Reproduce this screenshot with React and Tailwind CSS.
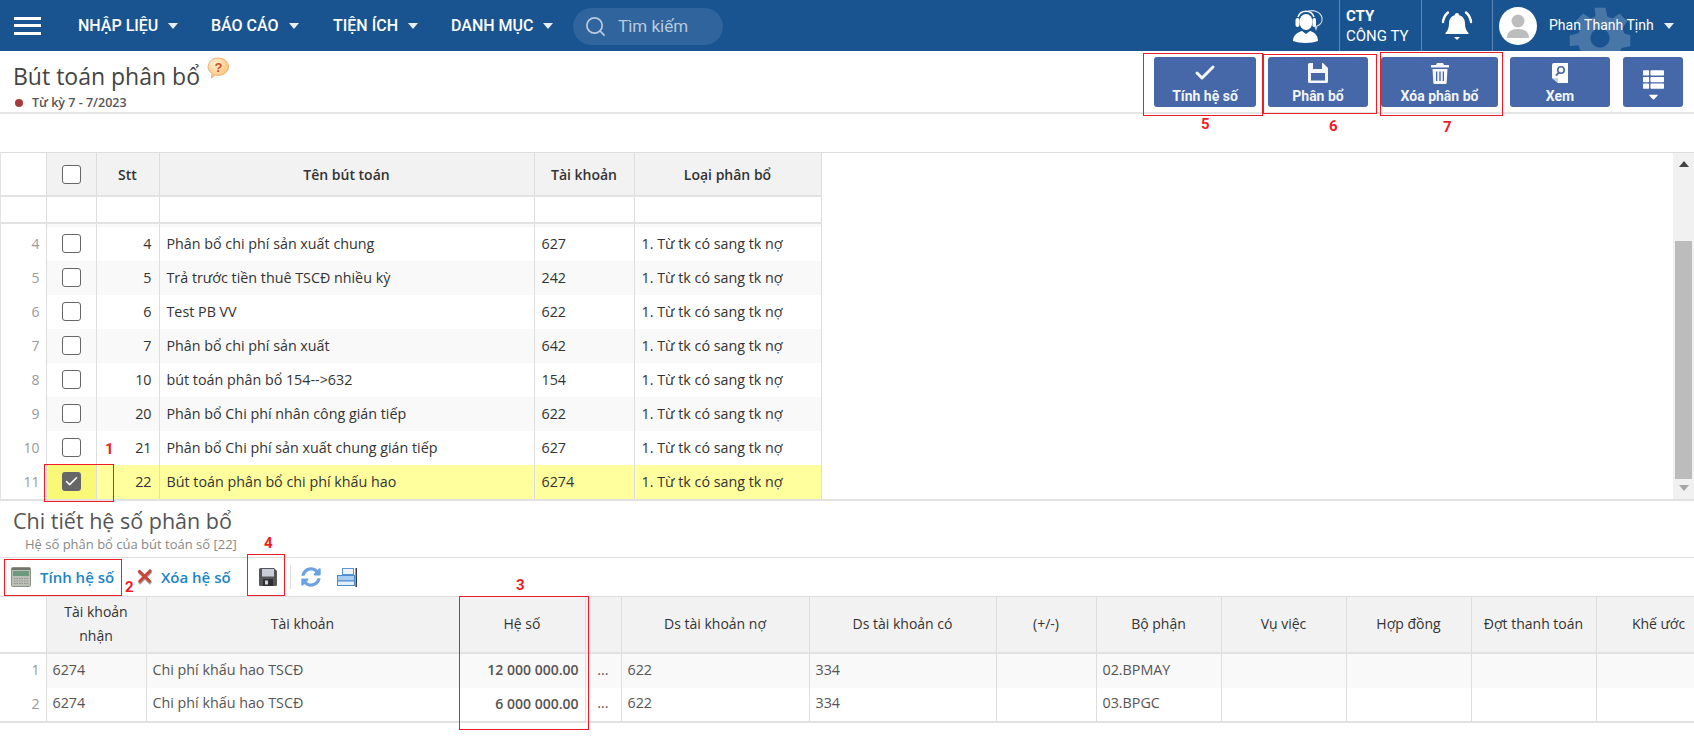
import React from 'react';
import { Check, Search } from 'lucide-react';
import { FaSyncAlt, FaThList, FaCaretDown } from 'react-icons/fa';

const TOP_ROWS = [
  ['4', '4', 'Phân bổ chi phí sản xuất chung', '627'],
  ['5', '5', 'Trả trước tiền thuê TSCĐ nhiều kỳ', '242'],
  ['6', '6', 'Test PB VV', '622'],
  ['7', '7', 'Phân bổ chi phí sản xuất', '642'],
  ['8', '10', 'bút toán phân bổ 154-->632', '154'],
  ['9', '20', 'Phân bổ Chi phí nhân công gián tiếp', '622'],
  ['10', '21', 'Phân bổ Chi phí sản xuất chung gián tiếp', '627'],
];

const DETAIL_ROWS = [
  ['1', '12 000 000.00', '02.BPMAY'],
  ['2', '6 000 000.00', '03.BPGC'],
];

const NAV = [
  ['NHẬP LIỆU', 'w-[133px]'],
  ['BÁO CÁO', 'w-[122px]'],
  ['TIỆN ÍCH', 'w-[118px]'],
  ['DANH MỤC', 'w-[122px]'],
];

function Caret() {
  return <span className="ml-[10px] inline-block h-0 w-0 border-x-[5px] border-t-[6px] border-x-transparent border-t-white/90" />;
}

function ActionButton({ width, icon, label }) {
  return (
    <button className={`flex h-[50px] flex-col items-center justify-between rounded-[3px] bg-[#4768a8] pt-[5px] pb-[2px] text-[14px] leading-[18px] font-bold text-white/95 ${width}`}>
      <span className="flex h-[22px] items-center">{icon}</span>
      <span>{label}</span>
    </button>
  );
}

function Box({ className }) {
  return <div className={`pointer-events-none absolute border border-[#ee1c25] ${className}`} />;
}

function Mark({ className, children }) {
  return <span className={`absolute text-[15px] leading-none font-bold text-[#ee1c25] ${className}`}>{children}</span>;
}

function Checkbox({ checked }) {
  if (checked) {
    return (
      <span className="mx-auto flex h-[19px] w-[19px] items-center justify-center rounded-[3px] bg-[#666666]">
        <Check size={15} strokeWidth={2.5} color="#fff" />
      </span>
    );
  }
  return <span className="mx-auto block h-[19px] w-[19px] rounded-[3px] border border-[#666666] bg-white" />;
}

function GearBg() {
  return (
    <svg className="absolute top-[5px] left-[1567px]" width="66" height="66" viewBox="0 0 24 24" fill="#ffffff" fillOpacity="0.2">
      <path fillRule="evenodd" d="M10 1h4l.6 3.1 1.9.8 2.6-1.8 2.8 2.8-1.8 2.6.8 1.9L23 11v4l-3.1.6-.8 1.9 1.800 2.6-2.800 2.800-2.600-1.800-1.900.8L13 23h-2l-.6-2.100-1.900-.8-2.600 1.800-2.800-2.800 1.800-2.600-.8-1.900L1 15v-4l3.100-.6.8-1.900-1.800-2.600 2.800-2.800 2.600 1.800 1.900-.8L10 1zm2 7.500a3.500 3.500 0 1 0 0 7 3.500 3.500 0 0 0 0-7z" />
    </svg>
  );
}

function SupportIcon() {
  return (
    <svg width="32" height="34" viewBox="0 0 32 34">
      <path d="M16 2c6-1.500 13 1 14 7 .6 4-2 7-5 8l-1 3-1-3" fill="none" stroke="#fff" strokeOpacity="0.8" strokeWidth="1.200" />
      <ellipse cx="14" cy="13" rx="6.500" ry="8" fill="#fff" />
      <rect x="3.500" y="9" width="4" height="9" rx="2" fill="#fff" />
      <rect x="20.500" y="9" width="3.500" height="9" rx="1.700" fill="#fff" />
      <path d="M6 8a8.500 8.500 0 0 1 16 0" fill="none" stroke="#fff" strokeWidth="1.500" />
      <path d="M1 32c0-6 5-9 9-10l4 3 4-3c4 1 8 4 8 10-6 2.500-19 2.500-25 0z" fill="#fff" />
    </svg>
  );
}

function BellIcon() {
  return (
    <svg width="32" height="32" viewBox="0 0 32 32" fill="#fff">
      <path d="M16 3c1.400 0 2.300 1 2.300 2.300 3.700 1 5.700 4 5.700 8 0 4.500 1 7 3.500 9.700v1H4.500v-1C7 20.300 8 17.800 8 13.300c0-4 2-7 5.700-8C13.700 4 14.600 3 16 3z" />
      <path d="M13 27h6l-3 3z" />
      <path d="M7 2.500C4 5 2.500 8 2 12M25 2.500c3 2.500 4.500 5.500 5 9.500" fill="none" stroke="#fff" strokeWidth="2.400" strokeLinecap="round" />
    </svg>
  );
}

function Avatar() {
  return (
    <span className="flex h-[38px] w-[38px] items-center justify-center overflow-hidden rounded-full bg-white">
      <svg width="24" height="26" viewBox="0 0 24 26" fill="#bdbdbd">
        <circle cx="12" cy="8" r="6.500" />
        <path d="M1 25c0-6 4-9 11-9s11 3 11 9z" />
      </svg>
    </span>
  );
}

function HelpIcon() {
  return (
    <svg width="23" height="22" viewBox="0 0 23 22">
      <defs>
        <radialGradient id="helpFill" cx="0.35" cy="0.3" r="0.8">
          <stop offset="0" stopColor="#fff0d0" />
          <stop offset="1" stopColor="#f9bd6c" />
        </radialGradient>
      </defs>
      <path d="M11.500 1a10 8.700 0 0 1 0 17.400c-1.500 0-2.500-.2-3.500-.6L4.500 21l.6-4.400A10 8.700 0 0 1 11.500 1z" fill="url(#helpFill)" stroke="#e9b078" />
      <text x="11.500" y="15" textAnchor="middle" fontSize="13" fontWeight="700" fill="#cf4f26" fontFamily="Liberation Sans, sans-serif">?</text>
    </svg>
  );
}

function SaveWhiteIcon() {
  return (
    <svg width="20" height="20" viewBox="0 0 20 20" fill="#ffffff" fillOpacity="0.95">
      <path fillRule="evenodd" d="M1.500 0H15l5 5v13.500a1.500 1.500 0 0 1-1.500 1.500h-17A1.500 1.500 0 0 1 0 18.500v-17A1.500 1.500 0 0 1 1.500 0zM5 0v6h9V0zM3 10v7.500h14V10z" />
    </svg>
  );
}

function TrashWhiteIcon() {
  return (
    <svg width="18" height="21" viewBox="0 0 18 21" fill="#ffffff" fillOpacity="0.95">
      <path d="M6 0h6l1 2h5v2.500H0V2h5z" />
      <path fillRule="evenodd" d="M1.500 6h15l-.8 13.500a1.500 1.500 0 0 1-1.500 1.500H3.800a1.500 1.500 0 0 1-1.500-1.500zM5 8.500V18h1.300V8.500zM8.300 8.500V18h1.400V8.500zM11.700 8.500V18H13V8.500z" />
    </svg>
  );
}

function DocSearchIcon() {
  return (
    <svg width="18" height="22" viewBox="0 0 18 22">
      <path d="M1 3a2 2 0 0 1 2-2h14v20H7l-6-5z" fill="#fff" />
      <path d="M1 16h6v5z" fill="#c5d0e6" />
      <circle cx="10" cy="8" r="3.200" fill="none" stroke="#4768a8" strokeWidth="1.600" />
      <path d="M8 10.500l-3 3" stroke="#4768a8" strokeWidth="1.800" />
    </svg>
  );
}

function CalcIcon() {
  return (
    <svg width="20" height="20" viewBox="0 0 20 20">
      <rect x="0.500" y="0.500" width="19" height="19" rx="1" fill="#bcc0b4" stroke="#8d9288" />
      <rect x="1" y="1" width="18" height="2" fill="#70756e" />
      <rect x="2" y="4" width="16" height="5" fill="#6d9a7f" />
      <path d="M3 11.500h14M3 14h14M3 16.500h14" stroke="#8b9086" strokeWidth="1.200" strokeDasharray="1.500 1" />
    </svg>
  );
}

function CrossIcon() {
  return (
    <svg width="18" height="16" viewBox="0 0 18 16">
      <path d="M3 2.500l12 12M15 2.500l-12 12" stroke="#a9a59e" strokeWidth="3.400" />
      <path d="M2.500 1.500l12 11.500M15 1l-12 12" stroke="#c9443a" strokeWidth="3" />
    </svg>
  );
}

function FloppyIcon() {
  return (
    <svg width="18" height="18" viewBox="0 0 18 18">
      <path d="M0 1.500A1.500 1.500 0 0 1 1.500 0H15l3 3v13.500a1.500 1.500 0 0 1-1.500 1.500h-15A1.500 1.500 0 0 1 0 16.500z" fill="#55565a" />
      <rect x="3" y="1" width="12" height="7.500" fill="#c9ced6" />
      <rect x="4" y="11" width="10" height="7" fill="#2e2f33" />
      <rect x="6" y="12.500" width="3" height="4" fill="#d5d5d5" />
    </svg>
  );
}

function PrintIcon() {
  return (
    <svg width="20" height="19" viewBox="0 0 20 19">
      <rect x="5.500" y="0.500" width="11" height="6" fill="#eef4fb" stroke="#5a97d6" />
      <rect x="0.500" y="7.500" width="17" height="5.500" fill="#a9cdf0" stroke="#4a8bd0" />
      <rect x="0.500" y="13" width="17" height="4.500" fill="#e2eefa" stroke="#4a8bd0" />
      <rect x="18.500" y="0" width="1.500" height="19" fill="#333a4a" />
    </svg>
  );
}

function TopGrid() {
  const th = 'border-r border-[#dddddd] bg-[#f2f2f2] px-1 text-center text-[14px] font-semibold text-[#333333]';
  const td = 'border-r border-[#dddddd] px-[7px] text-[14.3px] whitespace-nowrap text-[#333333]';
  const blank = 'border-r border-[#dddddd]';
  return (
    <table className="w-[820px] table-fixed border-collapse font-['Open_Sans',sans-serif]">
      <colgroup>
        <col className="w-[45px]" />
        <col className="w-[50px]" />
        <col className="w-[63px]" />
        <col className="w-[375px]" />
        <col className="w-[100px]" />
        <col className="w-[187px]" />
      </colgroup>
      <thead>
        <tr className="h-[43px] border-b-2 border-[#e2e2e2]">
          <th className="border-r border-[#dddddd] bg-white" />
          <th className={th}><Checkbox /></th>
          <th className={th}>Stt</th>
          <th className={th}>Tên bút toán</th>
          <th className={th}>Tài khoản</th>
          <th className={th}>Loại phân bổ</th>
        </tr>
        <tr className="h-[27px] border-b-2 border-[#e2e2e2]">
          <td className={blank} />
          <td className={blank} />
          <td className={blank} />
          <td className={blank} />
          <td className={blank} />
          <td className={blank} />
        </tr>
      </thead>
      <tbody>
        <tr className="h-[4px] bg-[#f9f9f9]">
          <td className={`${blank} bg-white`} />
          <td className={blank} />
          <td className={blank} />
          <td className={blank} />
          <td className={blank} />
          <td className={blank} />
        </tr>
        {TOP_ROWS.map((row, i) => (
          <tr key={row[0]} className={`h-[33.9px] ${i % 2 ? 'bg-[#f9f9f9]' : 'bg-white'}`}>
            <td className="border-r border-[#dddddd] bg-white pr-[6px] text-right text-[14px] text-[#999999]">{row[0]}</td>
            <td className={blank}><Checkbox /></td>
            <td className={`${td} text-right`}>{row[1]}</td>
            <td className={td}>{row[2]}</td>
            <td className={td}>{row[3]}</td>
            <td className={td}>1. Từ tk có sang tk nợ</td>
          </tr>
        ))}
        <tr className="h-[34px] bg-[#ffff9e]">
          <td className="border-r border-[#dddddd] bg-white pr-[6px] text-right text-[14px] text-[#999999]">11</td>
          <td className="border-r border-[#dddddd] bg-[#f9f977]"><Checkbox checked /></td>
          <td className={`${td} text-right`}>22</td>
          <td className={td}>Bút toán phân bổ chi phí khấu hao</td>
          <td className={td}>6274</td>
          <td className={td}>1. Từ tk có sang tk nợ</td>
        </tr>
      </tbody>
    </table>
  );
}

function DetailGrid() {
  const th = 'border-r border-[#dddddd] bg-[#f2f2f2] px-1 text-center text-[14px] leading-[24px] font-normal whitespace-nowrap text-[#333333]';
  const td = 'border-r border-[#dddddd] px-[6px] pb-[2px] text-[14.3px] whitespace-nowrap text-[#555555]';
  return (
    <table className="w-[1721px] table-fixed border-collapse font-['Open_Sans',sans-serif]">
      <colgroup>
        <col className="w-[46px]" />
        <col className="w-[100px]" />
        <col className="w-[313px]" />
        <col className="w-[126px]" />
        <col className="w-[36px]" />
        <col className="w-[188px]" />
        <col className="w-[187px]" />
        <col className="w-[100px]" />
        <col className="w-[125px]" />
        <col className="w-[125px]" />
        <col className="w-[125px]" />
        <col className="w-[125px]" />
        <col className="w-[125px]" />
      </colgroup>
      <thead>
        <tr className="h-[56px] border-y border-[#dddddd]">
          <th className="border-r border-[#dddddd] bg-white" />
          <th className={th}>Tài khoản<br />nhận</th>
          <th className={th}>Tài khoản</th>
          <th className={th}>Hệ số</th>
          <th className={th} />
          <th className={th}>Ds tài khoản nợ</th>
          <th className={th}>Ds tài khoản có</th>
          <th className={th}>(+/-)</th>
          <th className={th}>Bộ phận</th>
          <th className={th}>Vụ việc</th>
          <th className={th}>Hợp đồng</th>
          <th className={th}>Đợt thanh toán</th>
          <th className={th}>Khế ước</th>
        </tr>
      </thead>
      <tbody className="border-y-2 border-[#e2e2e2]">
        {DETAIL_ROWS.map((row, i) => (
          <tr key={row[0]} className={i === 0 ? 'h-[35px] bg-[#f9f9f9]' : 'h-[34px] bg-white'}>
            <td className="border-r border-[#dddddd] bg-white pr-[6px] pb-[2px] text-right text-[14px] text-[#999999]">{row[0]}</td>
            <td className={td}>6274</td>
            <td className={td}>Chi phí khấu hao TSCĐ</td>
            <td className={`${td} text-right text-[14px] font-semibold text-[#333333]`}>{row[1]}</td>
            <td className={`${td} text-center`}>...</td>
            <td className={td}>622</td>
            <td className={td}>334</td>
            <td className={td} />
            <td className={td}>{row[2]}</td>
            <td className={td} />
            <td className={td} />
            <td className={td} />
            <td className={td} />
          </tr>
        ))}
      </tbody>
    </table>
  );
}

export default function App() {
  return (
    <div className="relative h-[737px] w-[1694px] overflow-hidden bg-white font-['Roboto','Liberation_Sans',sans-serif]">
      {/* top bar */}
      <header className="relative flex h-[51px] items-center overflow-hidden bg-[#195491] text-white">
        <GearBg />
        <div className="ml-[14px] flex h-[18px] w-[27px] flex-col justify-between">
          <span className="h-[3px] bg-white" />
          <span className="h-[3px] bg-white" />
          <span className="h-[3px] bg-white" />
        </div>
        <nav className="ml-[37px] flex pt-[1px] text-[16px] font-medium">
          {NAV.map(([label, width]) => (
            <span key={label} className={`flex items-center whitespace-nowrap ${width}`}>{label}<Caret /></span>
          ))}
        </nav>
        <div className="mt-[2px] flex h-[37px] w-[150px] items-center rounded-full bg-[#2f649c] pl-[11px] text-[17px] text-[#b9cade]">
          <Search size={23} strokeWidth={1.8} />
          <span className="ml-[11px]">Tìm kiếm</span>
        </div>
        <div className="relative ml-auto flex h-full items-center">
          <span className="mr-[15px]"><SupportIcon /></span>
          <div className="flex h-full w-[82px] flex-col justify-center border-l border-[#5c86b4] pl-[6px] leading-[20px]">
            <span className="text-[15px] font-bold">CTY</span>
            <span className="text-[15px]">CÔNG TY</span>
          </div>
          <div className="flex h-full w-[71px] items-center justify-center border-l border-[#5c86b4]"><BellIcon /></div>
          <div className="flex h-full w-[202px] items-center border-l border-[#5c86b4] pl-[6px]">
            <Avatar />
            <span className="ml-[12px] text-[14px] whitespace-nowrap">Phan Thanh Tịnh</span>
            <Caret />
          </div>
        </div>
      </header>

      {/* page title + actions */}
      <div className="flex h-[63px] items-start justify-between border-b-2 border-[#e5e5e5] pr-[11px]">
        <div className="pl-[13px] font-['Open_Sans',sans-serif]">
          <div className="flex items-start">
            <h1 className="mt-[8px] text-[23px] leading-[34px] font-normal text-[#444444]">Bút toán phân bổ</h1>
            <span className="mt-[6px] ml-[7px]"><HelpIcon /></span>
          </div>
          <div className="mt-[2px] flex items-center text-[12.5px] leading-[16px] font-semibold text-[#555555]">
            <span className="ml-[2px] h-[8px] w-[8px] rounded-full bg-[#a63a3f]" />
            <span className="ml-[9px]">Từ kỳ 7 - 7/2023</span>
          </div>
        </div>
        <div className="mt-[6px] flex gap-[12px]">
          <ActionButton width="w-[102px]" label="Tính hệ số" icon={<Check size={24} strokeWidth={3} />} />
          <ActionButton width="w-[100px]" label="Phân bổ" icon={<SaveWhiteIcon />} />
          <ActionButton width="ml-px w-[117px]" label="Xóa phân bổ" icon={<TrashWhiteIcon />} />
          <ActionButton width="w-[100px]" label="Xem" icon={<DocSearchIcon />} />
          <button className="ml-px flex h-[50px] w-[60px] flex-col items-center rounded-[3px] bg-[#4768a8] pt-[12px] text-white">
            <FaThList size={21} />
            <FaCaretDown size={15} className="-mt-[1px]" />
          </button>
        </div>
      </div>

      {/* empty filter band */}
      <div className="h-[39px] border-b border-[#dddddd]" />

      {/* master grid */}
      <div className="flex h-[348px] justify-between border-b-2 border-l border-[#e2e2e2]">
        <TopGrid />
        <div className="flex w-[21px] flex-col items-center bg-[#f1f1f1]">
          <span className="mt-[8px] h-0 w-0 border-x-[5px] border-b-[6px] border-x-transparent border-b-[#444444]" />
          <span className="mt-[74px] h-[238px] w-[17px] bg-[#bcbcbc]" />
          <span className="mt-[6px] h-0 w-0 border-x-[5px] border-t-[6px] border-x-transparent border-t-[#a6a6a6]" />
        </div>
      </div>

      {/* detail section */}
      <div className="h-[57px] border-b border-[#dddddd] pl-[13px] font-['Open_Sans',sans-serif]">
        <h2 className="pt-[5px] text-[21.5px] leading-[29px] font-normal text-[#555555]">Chi tiết hệ số phân bổ</h2>
        <p className="pl-[12px] text-[13px] leading-[18px] text-[#888888]">Hệ số phân bổ của bút toán số [22]</p>
      </div>

      <div className="flex h-[38px] items-center pl-[11px] font-['Open_Sans',sans-serif] text-[15px] font-semibold whitespace-nowrap text-[#1b85c7]">
        <CalcIcon />
        <span className="ml-[9px] w-[75px]">Tính hệ số</span>
        <span className="ml-[21px]"><CrossIcon /></span>
        <span className="ml-[7px] w-[71px]">Xóa hệ số</span>
        <span className="ml-[27px]"><FloppyIcon /></span>
        <span className="ml-[13px] h-[24px] w-px bg-[#dddddd]" />
        <span className="ml-[10px]"><FaSyncAlt size={20} color="#6ba3e2" /></span>
        <span className="ml-[16px]"><PrintIcon /></span>
      </div>

      <DetailGrid />

      {/* red annotations laid over the screenshot */}
      <Box className="top-[53px] left-[1143px] h-[63px] w-[120px]" />
      <Box className="top-[54px] left-[1263px] h-[60px] w-[114px]" />
      <Box className="top-[52px] left-[1380px] h-[64px] w-[123px]" />
      <Box className="top-[464px] left-[44px] h-[38px] w-[70px]" />
      <Box className="top-[559px] left-[4px] h-[37px] w-[118px]" />
      <Box className="top-[554px] left-[247px] h-[42px] w-[38px]" />
      <Box className="top-[596px] left-[459px] h-[134px] w-[130px]" />
      <Mark className="top-[117px] left-[1201px]">5</Mark>
      <Mark className="top-[119px] left-[1329px]">6</Mark>
      <Mark className="top-[120px] left-[1443px]">7</Mark>
      <Mark className="top-[442px] left-[105px]">1</Mark>
      <Mark className="top-[580px] left-[125px]">2</Mark>
      <Mark className="top-[578px] left-[516px]">3</Mark>
      <Mark className="top-[536px] left-[264px]">4</Mark>
    </div>
  );
}
